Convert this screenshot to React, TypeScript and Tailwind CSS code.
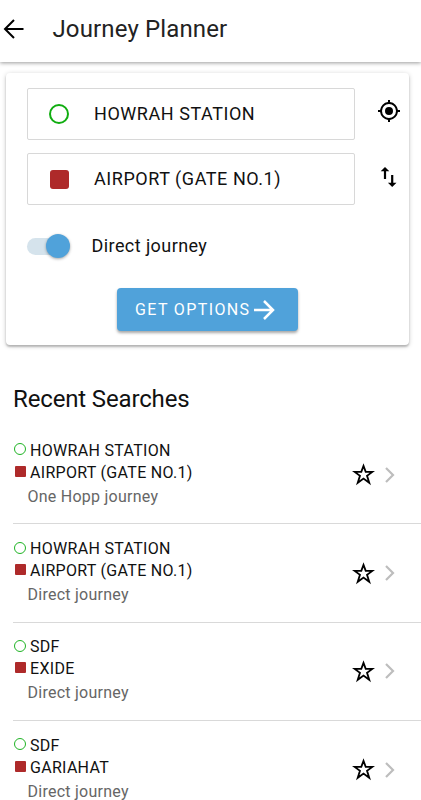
import React from "react";

type Search = { from: string; to: string; kind: string };

const searches: Search[] = [
  { from: "HOWRAH STATION", to: "AIRPORT (GATE NO.1)", kind: "One Hopp journey" },
  { from: "HOWRAH STATION", to: "AIRPORT (GATE NO.1)", kind: "Direct journey" },
  { from: "SDF", to: "EXIDE", kind: "Direct journey" },
  { from: "SDF", to: "GARIAHAT", kind: "Direct journey" },
];

function Field({ children, label }: { children: React.ReactNode; label: string }) {
  return (
    <div className="flex h-[52px] w-[328px] items-center rounded-[2px] border border-[#d8d8d8] pl-[21px]">
      <span className="flex w-5 shrink-0 justify-center">{children}</span>
      <span className="ml-[25px] text-[18px] leading-6 tracking-[0.55px] whitespace-nowrap">{label}</span>
    </div>
  );
}

function SearchRow({ item }: { item: Search }) {
  return (
    <li className="ml-[13px] flex h-[98.4px] shrink-0 items-center border-b border-[#d9d9d9]">
      <div className="w-[339px] pb-[1px]">
        <div className="flex h-[22px] items-center">
          <span className="mb-[3px] ml-[1px] h-3 w-3 rounded-full border border-[#1fb425]" />
          <span className="ml-[4px] text-[16px] leading-[22px] tracking-[0.3px] whitespace-nowrap">{item.from}</span>
        </div>
        <div className="flex h-[22px] items-center">
          <span className="mb-[3px] ml-[2px] h-[11px] w-[10.5px] rounded-[1px] bg-[#ae2a2a]" />
          <span className="ml-[4.5px] text-[16px] leading-[22px] tracking-[0.3px] whitespace-nowrap">{item.to}</span>
        </div>
        <p className="mt-[1px] ml-[14.5px] text-[16px] leading-6 tracking-[0.25px] text-[#666]">{item.kind}</p>
      </div>
      <svg className="h-[23px] w-[23px] shrink-0" viewBox="0 0 24 24" fill="none" stroke="#000" strokeWidth="1.9">
        <path d="M12 3L14.3 9.3H21.2L15.7 13.4L18 20.6L12 16.2L6 20.6L8.3 13.4L2.8 9.3H9.7Z" />
      </svg>
      <svg className="ml-[10px] h-4 w-[10px] shrink-0" viewBox="0 0 10 16" fill="none" stroke="#bdbdbd" strokeWidth="2.2">
        <path d="M1 1L8 8L1 15" />
      </svg>
    </li>
  );
}

export default function App() {
  return (
    <div className="flex h-[800px] w-[421px] flex-col overflow-hidden bg-white font-['Roboto',sans-serif] text-[#111]">
      <header className="flex h-[62px] shrink-0 items-center pb-[5px] shadow-[0_1px_4px_rgba(0,0,0,0.4)]">
        <svg className="ml-[3px] h-[22px] w-[22px]" viewBox="0 0 22 22" fill="none" stroke="#000" strokeWidth="2">
          <path d="M20.5 11H2.5M11 2L2 11L11 20" />
        </svg>
        <h1 className="ml-[27.5px] text-[24px] leading-8 tracking-[0.13px] whitespace-nowrap text-[#222]">Journey Planner</h1>
      </header>

      <section className="mt-[11px] ml-[6px] h-[272px] w-[403px] shrink-0 rounded-[4px] pt-[15px] pl-[21px] shadow-[0_2px_2px_rgba(0,0,0,0.2),0_1px_5px_rgba(0,0,0,0.2)]">
        <div className="flex items-center">
          <Field label="HOWRAH STATION">
            <span className="h-5 w-5 rounded-full border-2 border-[#10ad10]" />
          </Field>
          <svg className="mb-[6px] ml-[22px] h-6 w-6" viewBox="0 0 24 24" fill="#000">
            <path d="M12 8a4 4 0 1 0 0 8 4 4 0 0 0 0-8zm8.94 3A8.994 8.994 0 0 0 13 3.06V1h-2v2.06A8.994 8.994 0 0 0 3.06 11H1v2h2.06A8.994 8.994 0 0 0 11 20.94V23h2v-2.06A8.994 8.994 0 0 0 20.94 13H23v-2h-2.06zM12 19a7 7 0 1 1 0-14 7 7 0 0 1 0 14z" />
          </svg>
        </div>
        <div className="mt-[13px] flex items-center">
          <Field label="AIRPORT (GATE NO.1)">
            <span className="h-[19px] w-[19px] rounded-[3px] bg-[#ae2a2a]" />
          </Field>
          <svg className="mb-[4px] ml-[22px] h-6 w-6" viewBox="0 0 24 24" fill="none" stroke="#000" strokeWidth="2.2">
            <path d="M8 14V4M15.2 10V20" />
            <path d="M3.7 6.3L8 2L12.3 6.3ZM10.9 17.7L15.2 22L19.5 17.7Z" fill="#000" stroke="none" />
          </svg>
        </div>
        <div className="mt-[29px] flex h-6 items-center">
          <span className="flex h-[17px] w-[43px] items-center justify-end rounded-full bg-[#d5e3ec]">
            <span className="h-6 w-6 shrink-0 rounded-full bg-[#50a2da] shadow-[0_1px_3px_rgba(0,0,0,0.35)]" />
          </span>
          <span className="ml-[21.5px] text-[18px] leading-6 tracking-[0.42px]">Direct journey</span>
        </div>
        <button className="mt-[30px] ml-[90px] flex h-[43px] w-[181px] items-center rounded-[4px] bg-[#50a2da] pl-[18px] text-white shadow-[0_2px_3px_rgba(0,0,0,0.35)]">
          <span className="text-[16px] leading-6 tracking-[1.38px] whitespace-nowrap">GET OPTIONS</span>
          <svg className="ml-1 h-5 w-[21px] shrink-0" viewBox="0 0 21 20" fill="none" stroke="currentColor" strokeWidth="2.5">
            <path d="M0 10H19M10 1L19 10L10 19" />
          </svg>
        </button>
      </section>

      <h2 className="mt-[38px] ml-[13px] shrink-0 text-[24px] leading-8 tracking-[-0.15px] whitespace-nowrap">Recent Searches</h2>
      <ul className="mt-[11px] flex flex-col">
        {searches.map((item, i) => (
          <SearchRow key={i} item={item} />
        ))}
      </ul>
    </div>
  );
}
